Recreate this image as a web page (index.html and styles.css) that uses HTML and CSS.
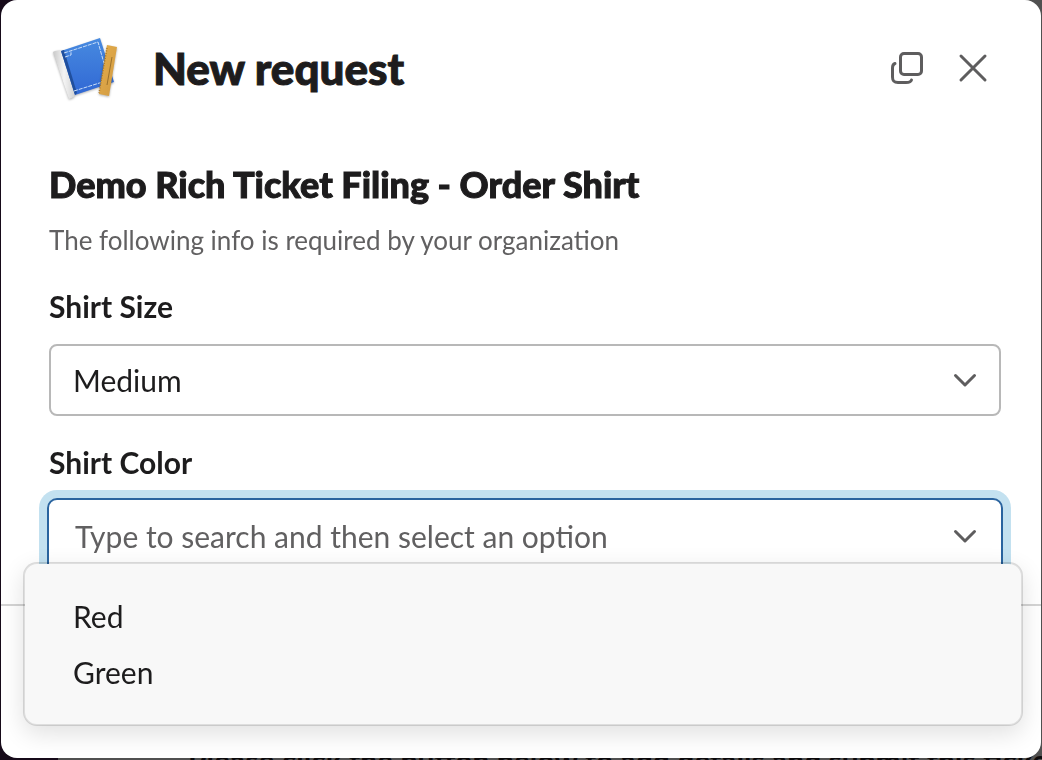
FILE: index.html
```
<!DOCTYPE html>
<html lang="en">
<head>
  <meta charset="UTF-8" />
  <meta name="viewport" content="width=device-width, initial-scale=1.0"/>
  <title>New request</title>
  <link rel="stylesheet" href="styles.css">
</head>
<body>

<!-- Channel behind the modal -->
<div class="backdrop">
  <p class="message">Please click the button below to add details and submit this ticket</p>
</div>

<div class="modal" role="dialog" aria-labelledby="title">
  <header class="modal-header">
    <svg class="app-icon" viewBox="0 0 72 72" aria-hidden="true">
      <defs>
        <linearGradient id="cover" x1="0" y1="0" x2="0" y2="1">
          <stop offset="0" stop-color="#478ae0"/>
          <stop offset="1" stop-color="#3168d4"/>
        </linearGradient>
        <linearGradient id="paper" x1="0" y1="0" x2="1" y2="0">
          <stop offset="0" stop-color="#c8c8c8"/>
          <stop offset="0.5" stop-color="#f4f4f4"/>
          <stop offset="1" stop-color="#d2d2d2"/>
        </linearGradient>
        <linearGradient id="wood" x1="0" y1="0" x2="1" y2="1">
          <stop offset="0" stop-color="#e5ae4c"/>
          <stop offset="1" stop-color="#d19a41"/>
        </linearGradient>
      </defs>
      <g class="app-shape">
        <path d="M4 20 L6 19 L12 18 L26 62 L25 65 L20 67 Z" fill="url(#paper)"/>
        <path d="M12 19 L51 6 L65 50 L26 63 Z" fill="url(#cover)"/>
        <path d="M12 19 L15 18 L28 61 L26 63 Z" fill="#204f9d"/>
        <path d="M15 21 L49 10 L60 49 M25 59 L60 48 M16 25 L22 23 L22 19" fill="none" stroke="#c9def8" stroke-width="1" stroke-dasharray="4 1"/>
      </g>
      <g class="app-shape">
        <path d="M58 13 L68 15 L60 64 L50 62 Z" fill="url(#wood)"/>
        <path d="M58 16 L50 61" fill="none" stroke="#a87527" stroke-width="1.500" stroke-dasharray="1 1.500"/>
        <path d="M63 25 L58 53" fill="none" stroke="#9b712c" stroke-width="1"/>
      </g>
    </svg>
    <h1 id="title">New request</h1>
    <button class="icon-button" type="button" aria-label="Open in new window">
      <svg viewBox="0 0 40 40" aria-hidden="true">
        <rect x="13.500" y="5.500" width="21" height="21" rx="3.500"/>
        <path d="M8 15.500 C6.500 16 5.500 17.500 5.500 20 V29 C5.500 33 7 34.500 11 34.500 H19 C22 34.500 24 34 24.500 32"/>
      </svg>
    </button>
    <button class="icon-button" type="button" aria-label="Close">
      <svg viewBox="0 0 40 40" aria-hidden="true">
        <path d="M8 8 L32 32 M32 8 L8 32"/>
      </svg>
    </button>
  </header>

  <form class="modal-body">
    <h2>Demo Rich Ticket Filing - Order Shirt</h2>
    <p class="hint">The following info is required by your organization</p>

    <label for="size">Shirt Size</label>
    <div class="field">
      <select id="size">
        <option>Small</option>
        <option selected>Medium</option>
        <option>Large</option>
      </select>
      <svg class="chevron" viewBox="0 0 24 16" aria-hidden="true"><path d="M2.500 3.500 L12 13 L21.500 3.500"/></svg>
    </div>

    <label for="color">Shirt Color</label>
    <div class="field focused">
      <input id="color" type="text" role="combobox" aria-expanded="true" aria-controls="colors" placeholder="Type to search and then select an option">
      <svg class="chevron" viewBox="0 0 24 16" aria-hidden="true"><path d="M2.500 3.500 L12 13 L21.500 3.500"/></svg>
      <ul id="colors" class="menu" role="listbox">
        <li role="option">Red</li>
        <li role="option">Green</li>
      </ul>
    </div>
  </form>

  <footer class="modal-footer"></footer>
</div>

</body>
</html>
```
FILE: styles.css
```
* { box-sizing: border-box; }
body {
  margin: 0; min-height: 100vh; padding: 0 1px 2px; display: flex;
  font-family: Lato, "Liberation Sans", sans-serif; font-size: 30px; line-height: 40px;
  color: #1d1c1d; background: #160a19;
}

/* channel behind the modal */
.backdrop {
  position: fixed; top: 0; right: 0; bottom: 0; left: 58px;
  background: #505050; overflow: hidden;
}
.message {
  position: absolute; left: 130px; bottom: -20px; margin: 0;
  white-space: nowrap; font-weight: bold; color: #0c0a0c;
}

.modal {
  position: relative; flex: 1; display: flex; flex-direction: column;
  background: #fff; border-radius: 16px;
}
.modal-header {
  display: flex; align-items: center; height: 136px; padding: 0 48px 0 48px;
}
.app-icon { width: 72px; height: 72px; }
.app-shape { filter: drop-shadow(0 1px 1px rgba(0, 0, 0, 0.3)); }
h1, h2 { font-weight: 900; -webkit-text-stroke: 1px #1d1c1d; }
h1 { flex: 1; margin: 0 0 0 32px; font-size: 44px; line-height: 56px; }
.icon-button {
  width: 40px; height: 40px; margin-left: 26px; padding: 0;
  border: 0; background: none; cursor: pointer;
}
.icon-button svg { display: block; width: 40px; height: 40px; }
.icon-button svg, .chevron {
  fill: none; stroke: #5e5d5e; stroke-width: 3;
  stroke-linecap: round; stroke-linejoin: round;
}

.modal-body { padding: 24px 40px 32px 48px; border-bottom: 2px solid #d4d4d4; }
h2 { margin: 0; font-size: 36px; line-height: 48px; }
.hint { margin: 12px 0 26px; font-size: 26px; line-height: 40px; color: #616061; }
label { display: block; margin-bottom: 18px; font-weight: bold; }

.field { position: relative; margin-bottom: 26px; }
.field select, .field input {
  display: block; width: 100%; height: 72px; padding: 0 72px 0 22px;
  border: 2px solid #b8b8b8; border-radius: 8px; outline: 0;
  appearance: none; background: #fff; font: inherit; color: inherit;
}
.field input::placeholder { color: #616061; opacity: 1; }
.focused { margin-bottom: 0; }
.focused input {
  padding-left: 24px; border-color: #fff;
  box-shadow: 0 0 0 2px #2a649f, 0 0 0 10px #c3e1f0;
}
.chevron {
  position: absolute; top: 28px; right: 24px; width: 24px; height: 16px;
  pointer-events: none;
}

.menu {
  position: absolute; top: 62px; left: -26px; right: -22px; z-index: 1;
  margin: 0; padding: 24px 0; list-style: none;
  background: #f8f8f8; background-clip: padding-box;
  border: 2px solid rgba(0, 0, 0, 0.13); border-radius: 14px;
  box-shadow: 0 8px 24px rgba(0, 0, 0, 0.12);
}
.menu li { padding: 8px 48px; }
.modal-footer { flex: 1; }
```
